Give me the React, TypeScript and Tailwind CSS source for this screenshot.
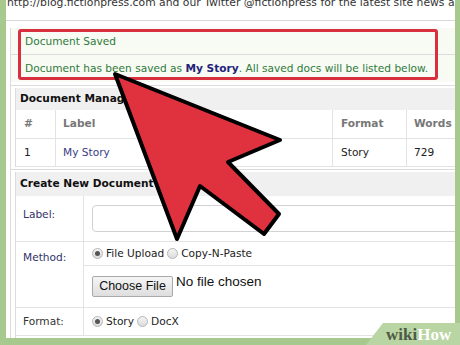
import React from "react";

function Radio({ on }: { on?: boolean }) {
  return (
    <span className="inline-flex items-center justify-center w-[11px] h-[11px] rounded-full border border-[#b5b5b5] bg-gradient-to-b from-[#f4f4f4] to-[#dcdcdc] mr-[3px]">
      {on ? <span className="w-[5px] h-[5px] rounded-full bg-[#555]" /> : null}
    </span>
  );
}

export default function App() {
  return (
    <div className="relative w-[460px] h-[345px] overflow-hidden bg-[#a7c98e] font-[family-name:'DejaVu_Sans',Verdana,sans-serif] text-[10.6px]">
      <div className="ml-[6px] w-[449px] h-[338px] bg-white overflow-hidden flex flex-col">
        {/* top text line */}
        <div className="h-[21px] border-b border-[#d9d9d9] overflow-hidden shrink-0">
          <div className="-mt-[3px] pl-[1px] leading-[12px] whitespace-nowrap text-[#333] text-[10.8px]">
            http://blog.fictionpress.com and our Twitter @fictionpress for the latest site news a
          </div>
        </div>
        <div className="mt-[7px] ml-[4px] border-l border-[#dcdcdc] flex-1 flex flex-col">
          {/* message */}
          <div className="bg-[#f8fbf4] text-[#2f7a3b]">
            <div className="h-[27px] border-b border-[#dcdcdc] flex items-center pl-[14px] pt-[2px]">Document Saved</div>
            <div className="h-[27px] flex items-center pl-[14px] whitespace-nowrap">
              Document has been saved as&nbsp;<b className="text-[#23237a]">My Story</b>. All saved docs will be listed below.
            </div>
          </div>
          <div className="h-[4px] border-b border-[#dcdcdc]" />
          {/* document manager */}
          <div className="ml-[4px] mt-[2px] border-l border-[#dcdcdc]">
            <div className="h-[22px] bg-[#f0f0f0] flex items-center pl-[4px] font-bold text-[#111]">Document Manager</div>
            <div className="grid grid-cols-[40px_277px_74px_60px] text-[#777] font-bold h-[29px] border-b border-[#e3e3e3]">
              <div className="flex items-center pl-[8px] border-r border-[#e3e3e3]">#</div>
              <div className="flex items-center pl-[7px] border-r border-[#e3e3e3]">Label</div>
              <div className="flex items-center pl-[8px] border-r border-[#e3e3e3]">Format</div>
              <div className="flex items-center pl-[7px]">Words</div>
            </div>
            <div className="grid grid-cols-[40px_277px_74px_60px] text-[#222] h-[28px] border-b border-[#e3e3e3]">
              <div className="flex items-center pl-[8px] border-r border-[#e3e3e3]">1</div>
              <div className="flex items-center pl-[7px] border-r border-[#e3e3e3] text-[#3b3b85]">My Story</div>
              <div className="flex items-center pl-[8px] border-r border-[#e3e3e3]">Story</div>
              <div className="flex items-center pl-[7px]">729</div>
            </div>
          </div>
          <div className="h-[3px] border-b border-[#dcdcdc]" />
          {/* create new document */}
          <div className="ml-[4px] mt-[2px] border-l border-[#dcdcdc] flex-1 flex flex-col">
            <div className="h-[24px] bg-[#f0f0f0] flex items-center pl-[4px] font-bold text-[#111]">Create New Document</div>
            <div className="grid grid-cols-[68px_1fr] h-[46px] border-b border-[#e3e3e3]">
              <div className="pl-[7px] pt-[11px] border-r border-[#e3e3e3] text-[#33336a]">Label:</div>
              <div className="pl-[8px] pt-[9px]">
                <div className="w-[400px] h-[27px] rounded-[4px] border border-[#d2d2d2] bg-white" />
              </div>
            </div>
            <div className="grid grid-cols-[68px_1fr] h-[66px] border-b border-[#e3e3e3]">
              <div className="pl-[7px] pt-[8px] border-r border-[#e3e3e3] text-[#33336a]">Method:</div>
              <div className="flex flex-col">
                <div className="h-[24px] border-b border-[#e3e3e3] flex items-center pl-[8px] text-[#222] whitespace-nowrap">
                  <Radio on />File Upload <span className="ml-[3px]" /><Radio />Copy-N-Paste
                </div>
                <div className="flex items-start pl-[8px] pt-[10px] font-[family-name:'Liberation_Sans',Arial,sans-serif] text-[#111]">
                  <div className="h-[21px] w-[81px] border border-[#a9a9a9] rounded-[2px] bg-gradient-to-b from-[#f5f5f5] to-[#dedede] flex items-center justify-center text-[12.5px]">Choose File</div>
                  <div className="ml-[3px] -mt-[4px] text-[13.5px]">No file chosen</div>
                </div>
              </div>
            </div>
            <div className="grid grid-cols-[68px_1fr] h-[28px] border-b border-[#e3e3e3]">
              <div className="pl-[7px] flex items-center border-r border-[#e3e3e3] text-[#333]">Format:</div>
              <div className="flex items-center pl-[8px] text-[#222]">
                <Radio on />Story <span className="ml-[3px]" /><Radio />DocX
              </div>
            </div>
          </div>
        </div>
      </div>

      {/* red highlight box */}
      <div className="absolute left-[18px] top-[29px] w-[420px] h-[51px] border-[3px] border-[#d9303f] rounded-[3px]" />

      {/* red arrow */}
      <svg className="absolute left-0 top-0" width="460" height="345" viewBox="0 0 460 345">
        <polygon
          points="115,74 280,140 228,162 279,214 264,234 200,186 177,239"
          fill="#e0313f"
          stroke="#000"
          strokeWidth="4"
          strokeLinejoin="round"
        />
      </svg>

      {/* wikiHow logo */}
      <svg className="absolute left-0 top-0" width="460" height="345" viewBox="0 0 460 345">
        <polygon points="383,323 460,323 460,345 366,345" fill="#b9d5a3" />
      </svg>
      <div className="absolute left-[386px] top-[326px] leading-[18px] text-[17px] font-bold font-[family-name:'Liberation_Serif',serif] whitespace-nowrap">
        <span className="text-[#4d5a45]">wiki</span>
        <span className="text-white">How</span>
      </div>
    </div>
  );
}
